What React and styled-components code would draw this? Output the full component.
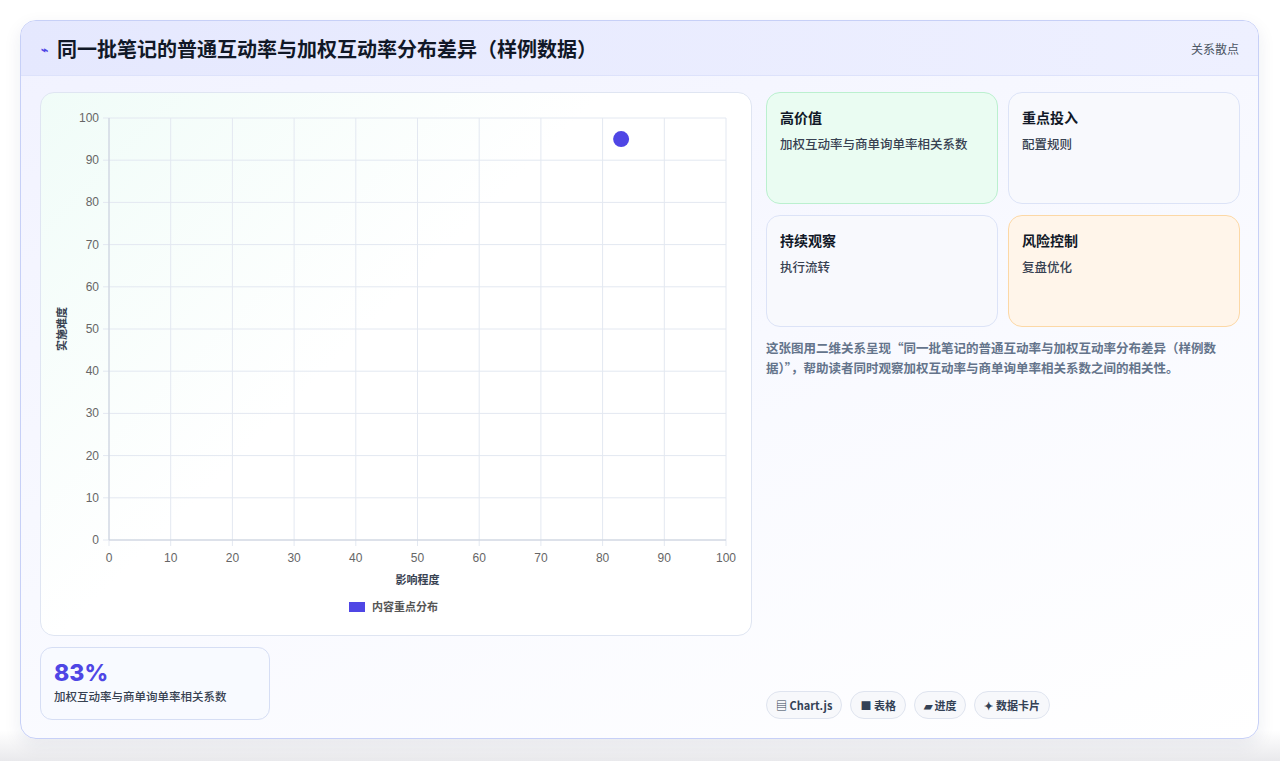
import React from 'react'
import styled, { createGlobalStyle } from 'styled-components'

const Global = createGlobalStyle`
  body { margin: 0; background: #ececef; font-family: "Noto Sans CJK SC", "Noto Sans", sans-serif; }
`

const Page = styled.div`
  width: 1280px;
  height: 761px;
  padding: 20px;
  box-sizing: border-box;
  background: linear-gradient(180deg, #ffffff 0%, #ffffff 96%, #e9e9ec 100%);
`

const Shell = styled.div`
  width: 1239px;
  height: 719px;
  box-sizing: border-box;
  border: 1px solid #c7d0f7;
  border-radius: 16px;
  overflow: hidden;
  background: linear-gradient(160deg, #f1f2ff 0%, #f8f9ff 50%, #ffffff 100%);
  box-shadow: 0 6px 18px rgba(30, 40, 90, 0.08);
  display: flex;
  flex-direction: column;
`

const Header = styled.div`
  height: 55px;
  flex: none;
  box-sizing: border-box;
  display: flex;
  align-items: center;
  justify-content: space-between;
  padding: 0 19px 0 20px;
  background: linear-gradient(90deg, #e5e8fe, #eef0ff);
  border-bottom: 1px solid #dde2fb;
`

const Title = styled.h1`
  margin: 0;
  font-size: 20px;
  font-weight: 700;
  color: #111827;
  display: flex;
  align-items: center;
  gap: 9px;
`

const Tag = styled.span`
  font-size: 12px;
  color: #4b5563;
`

const Body = styled.div`
  flex: 1;
  display: grid;
  grid-template-columns: 712px 474px;
  column-gap: 14px;
  padding: 16px 18px 18px 19px;
`

const Left = styled.div`
  display: flex;
  flex-direction: column;
  gap: 11px;
`

const ChartCard = styled.div`
  height: 544px;
  box-sizing: border-box;
  border: 1px solid #dfe5f2;
  border-radius: 14px;
  background: linear-gradient(135deg, #f0fcf8 0%, #ffffff 45%);
  overflow: hidden;
`

const Kpi = styled.div`
  width: 230px;
  height: 73px;
  box-sizing: border-box;
  border: 1px solid #d6def4;
  border-radius: 12px;
  background: #f8faff;
  padding: 10px 13px;
`

const KpiValue = styled.div`
  font-family: "Inter", "Noto Sans", sans-serif;
  font-size: 23px;
  font-weight: 800;
  color: #4f46e5;
  line-height: 30px;
`

const KpiLabel = styled.div`
  font-size: 11.5px;
  font-weight: 500;
  color: #374151;
`

const Right = styled.div`
  display: flex;
  flex-direction: column;
`

const Cards = styled.div`
  display: grid;
  grid-template-columns: 1fr 1fr;
  gap: 11px 10px;
`

const tones = {
  green: ['#eafcf2', '#bbf0cf'],
  orange: ['#fff5ea', '#fcd8a6'],
  plain: ['#f8f9fd', '#dce3f7'],
}

const Card = styled.div`
  height: 112px;
  box-sizing: border-box;
  border-radius: 14px;
  padding: 14px 13px;
  background: ${p => tones[p.$tone][0]};
  border: 1px solid ${p => tones[p.$tone][1]};
`

const CardTitle = styled.div`
  font-size: 14px;
  font-weight: 700;
  color: #111827;
  margin-bottom: 7px;
`

const CardText = styled.div`
  font-size: 12.5px;
  font-weight: 500;
  color: #374151;
`

const Desc = styled.p`
  margin: 11px 0 0;
  font-size: 12.5px;
  line-height: 20px;
  color: #64748b;
  font-weight: 700;
`

const Chips = styled.div`
  margin-top: auto;
  margin-bottom: 1px;
  display: flex;
  gap: 8px;
`

const Chip = styled.span`
  height: 28px;
  box-sizing: border-box;
  padding: 0 9px;
  border-radius: 14px;
  border: 1px solid #dfe4ef;
  background: #f7f8fb;
  display: inline-flex;
  align-items: center;
  gap: 3px;
  font-size: 11px;
  font-weight: 700;
  color: #334155;
`

const X0 = 68, X1 = 685, Y0 = 25, Y1 = 447

function Chart() {
  const ticks = [0, 10, 20, 30, 40, 50, 60, 70, 80, 90, 100]
  const px = v => X0 + (v / 100) * (X1 - X0)
  const py = v => Y1 - (v / 100) * (Y1 - Y0)
  const f = { fontFamily: 'Liberation Sans, Arial, sans-serif', fontSize: 12, fill: '#666' }
  return (
    <svg width="711" height="542">
      {ticks.map(t => (
        <g key={'g' + t}>
          <line x1={px(t)} x2={px(t)} y1={Y0} y2={Y1 + 6} stroke="#e3e8f1" />
          <line x1={X0 - 6} x2={X1} y1={py(t)} y2={py(t)} stroke="#e3e8f1" />
          <text x={X0 - 10} y={py(t) + 4} textAnchor="end" {...f}>{t}</text>
          <text x={px(t)} y={Y1 + 22} textAnchor="middle" {...f}>{t}</text>
        </g>
      ))}
      <line x1={X0} x2={X0} y1={Y0} y2={Y1} stroke="#c9d0dc" />
      <line x1={X0} x2={X1} y1={Y1} y2={Y1} stroke="#c9d0dc" />
      <circle cx={px(83)} cy={py(95)} r="8" fill="#4f46e5" />
      <text x={X0 + (X1 - X0) / 2} y={Y1 + 44} textAnchor="middle" fontSize="11" fontWeight="700" fill="#374151" fontFamily="Noto Sans CJK SC, sans-serif">影响程度</text>
      <text transform={`translate(25 ${(Y0 + Y1) / 2}) rotate(-90)`} textAnchor="middle" fontSize="11" fontWeight="700" fill="#374151" fontFamily="Noto Sans CJK SC, sans-serif">实施难度</text>
      <rect x="308" y="509" width="16" height="10" fill="#4f46e5" />
      <text x="331" y="518" fontSize="11" fontWeight="700" fill="#555" fontFamily="Noto Sans CJK SC, sans-serif">内容重点分布</text>
    </svg>
  )
}

export default function App() {
  return (
    <Page>
      <Global />
      <Shell>
        <Header>
          <Title><span style={{ color: '#4f46e5', fontSize: 12 }}>⌁</span>同一批笔记的普通互动率与加权互动率分布差异（样例数据）</Title>
          <Tag>关系散点</Tag>
        </Header>
        <Body>
          <Left>
            <ChartCard><Chart /></ChartCard>
            <Kpi>
              <KpiValue>83%</KpiValue>
              <KpiLabel>加权互动率与商单询单率相关系数</KpiLabel>
            </Kpi>
          </Left>
          <Right>
            <Cards>
              <Card $tone="green"><CardTitle>高价值</CardTitle><CardText>加权互动率与商单询单率相关系数</CardText></Card>
              <Card $tone="plain"><CardTitle>重点投入</CardTitle><CardText>配置规则</CardText></Card>
              <Card $tone="plain"><CardTitle>持续观察</CardTitle><CardText>执行流转</CardText></Card>
              <Card $tone="orange"><CardTitle>风险控制</CardTitle><CardText>复盘优化</CardText></Card>
            </Cards>
            <Desc>这张图用二维关系呈现“同一批笔记的普通互动率与加权互动率分布差异（样例数据）”，帮助读者同时观察加权互动率与商单询单率相关系数之间的相关性。</Desc>
            <Chips>
              <Chip>▤ Chart.js</Chip>
              <Chip>■ 表格</Chip>
              <Chip>▰ 进度</Chip>
              <Chip>✦ 数据卡片</Chip>
            </Chips>
          </Right>
        </Body>
      </Shell>
    </Page>
  )
}
